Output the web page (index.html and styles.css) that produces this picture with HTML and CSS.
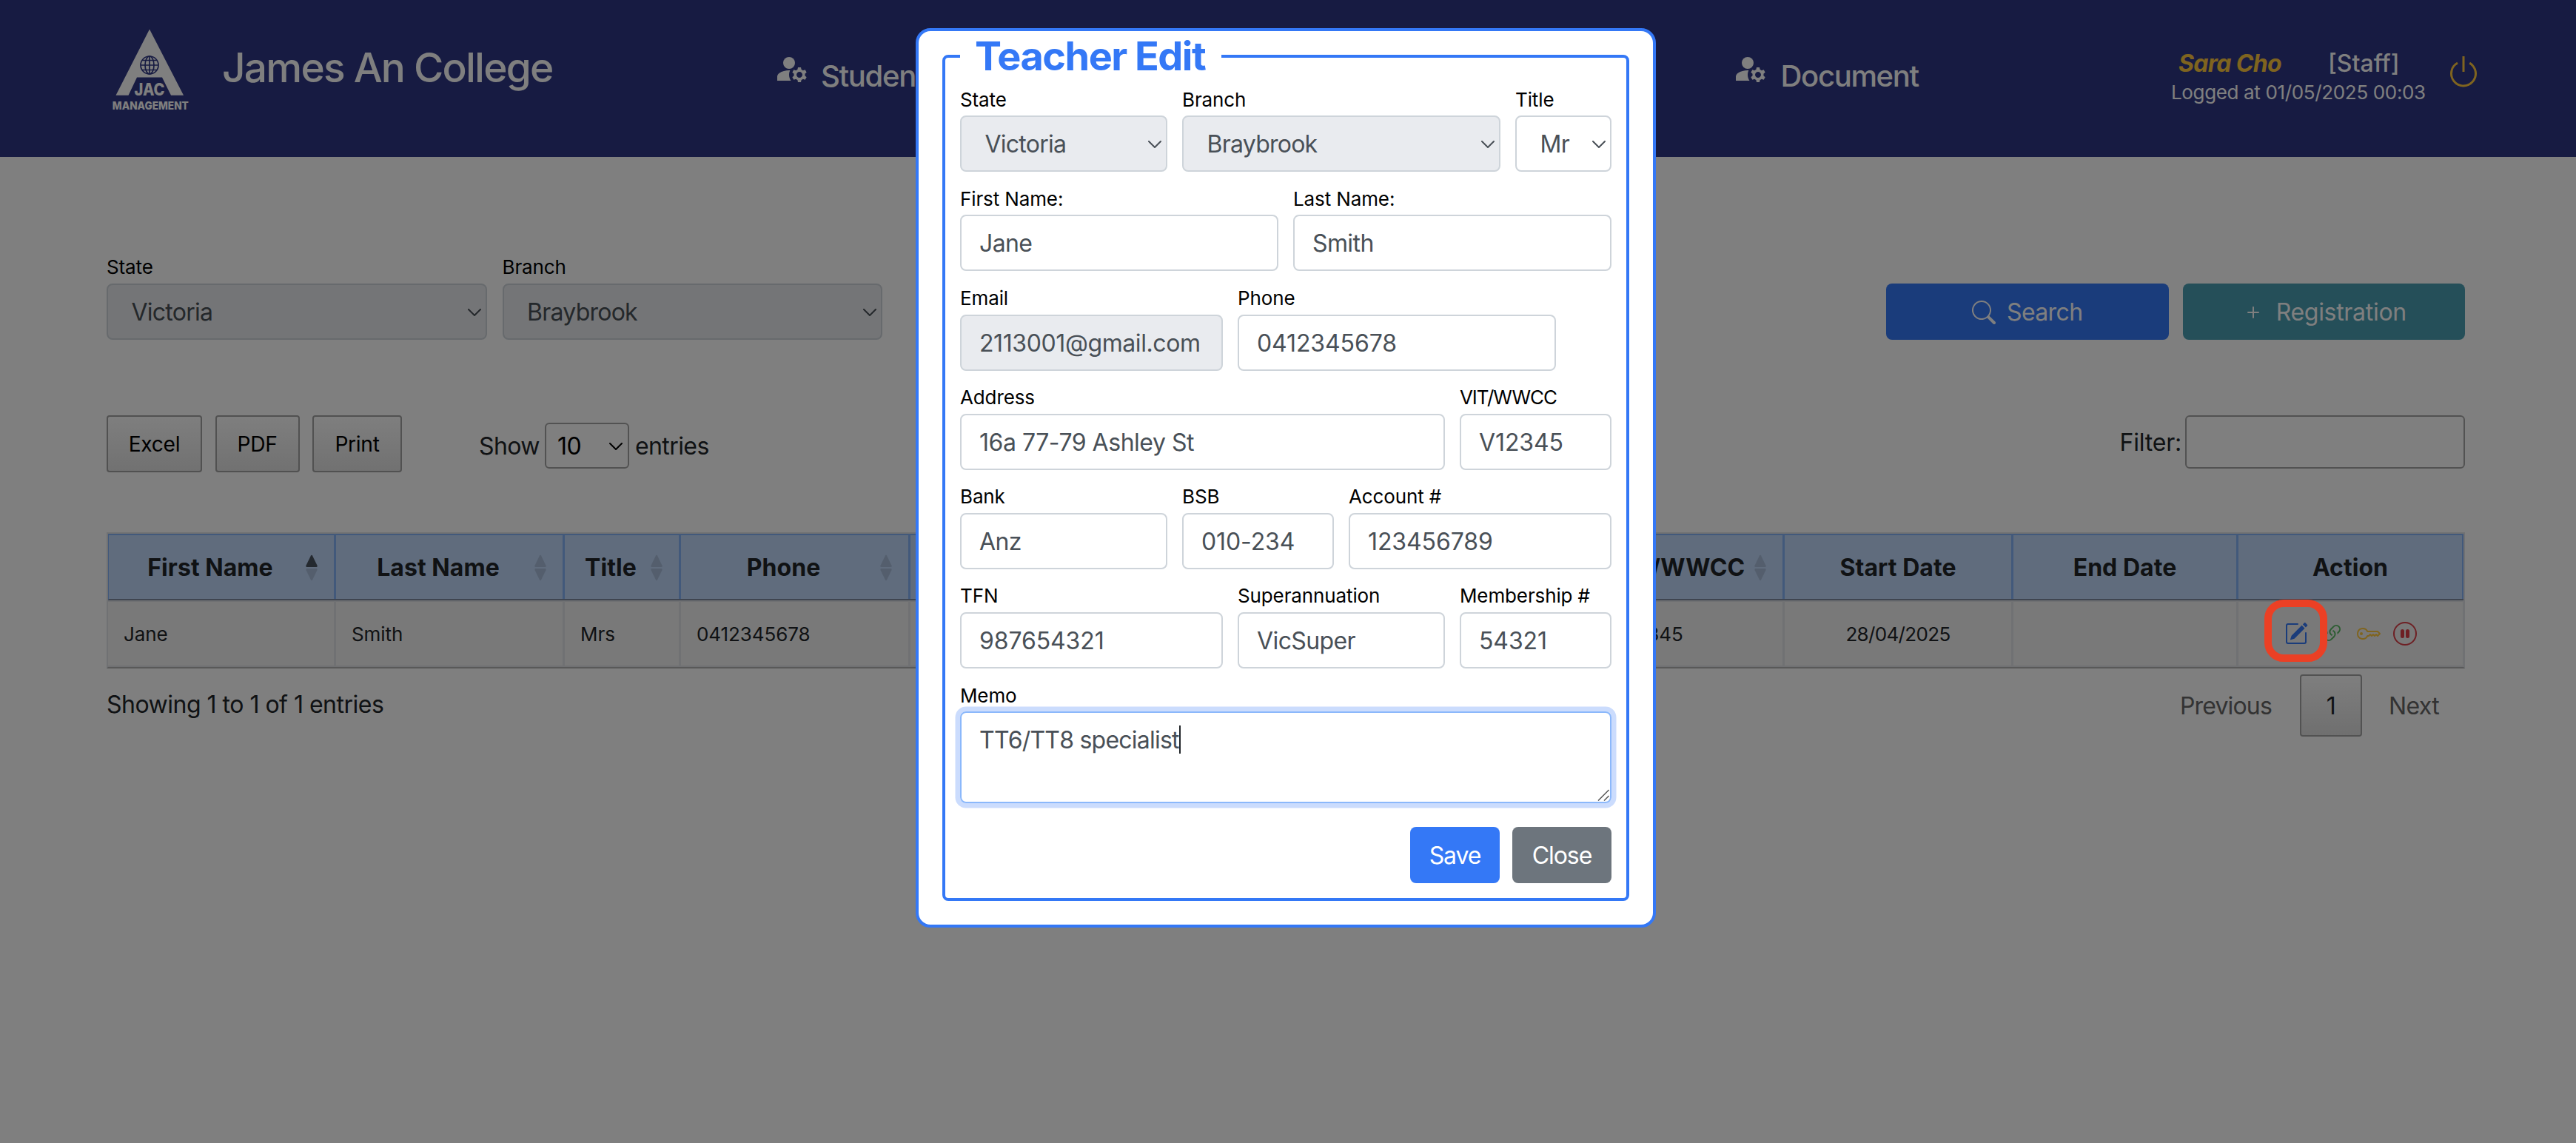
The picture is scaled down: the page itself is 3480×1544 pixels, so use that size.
FILE: index.html
```html
<!DOCTYPE html>
<html lang="en">
<head>
<meta charset="utf-8">
<title>James An College</title>
<link rel="stylesheet" href="styles.css">
</head>
<body>
<svg class="defs" width="0" height="0">
  <symbol id="accounts" viewBox="0 0 24 24">
    <circle cx="10" cy="8" r="4"/>
    <path d="M10.67 13.02c-.22-.01-.44-.02-.67-.02-2.42 0-4.68.67-6.61 1.82-.88.52-1.39 1.5-1.39 2.53V20h9.26c-.79-1.13-1.26-2.51-1.26-4 0-1.07.25-2.07.67-2.98zM20.75 16c0-.22-.03-.42-.06-.63l1.14-1.01-1-1.73-1.45.49c-.32-.27-.68-.48-1.08-.63L18 11h-2l-.3 1.49c-.4.15-.76.36-1.08.63l-1.45-.49-1 1.73 1.14 1.01c-.03.21-.06.41-.06.63s.03.42.06.63l-1.14 1.01 1 1.73 1.45-.49c.32.27.68.48 1.08.63L16 21h2l.3-1.49c.4-.15.76-.36 1.08-.63l1.45.49 1-1.73-1.14-1.01c.03-.21.06-.41.06-.63zM17 18c-1.1 0-2-.9-2-2s.9-2 2-2 2 .9 2 2-.9 2-2 2z"/>
  </symbol>
  <symbol id="chevron" viewBox="0 0 18 10">
    <path d="M1 1l8 8 8-8" fill="none" stroke="currentColor" stroke-width="2" stroke-linecap="round" stroke-linejoin="round"/>
  </symbol>
  <symbol id="sort" viewBox="0 0 16 36">
    <path class="up" d="M7 1.5Q8 0 9 1.5L15.6 15Q16 17 14.5 17H1.5Q0 17 .4 15z"/>
    <path class="down" d="M7 34.5Q8 36 9 34.5L15.6 21Q16 19 14.5 19H1.5Q0 19 .4 21z"/>
  </symbol>
</svg>

<div class="page">
  <header class="topbar">
    <svg class="logo" viewBox="150 36 106 116">
      <path class="logo-a" d="M202 39.5L248 128.7H231L219 104.5H185L173.500 128.7H156.500z"/>
      <g class="logo-grid">
        <circle cx="202" cy="88" r="12"/>
        <ellipse cx="202" cy="88" rx="6" ry="12"/>
        <path d="M202 76v24M190 88h24M192 81.500h20M192 94.500h20"/>
      </g>
      <text class="logo-jac" x="202" y="128.700" textLength="41" lengthAdjust="spacingAndGlyphs">JAC</text>
      <text class="logo-mgmt" x="203.300" y="147.700" textLength="103" lengthAdjust="spacingAndGlyphs">MANAGEMENT</text>
    </svg>
    <h1 class="brand">James An College</h1>
    <nav class="nav">
      <a class="nav-item"><svg class="nav-icon"><use href="#accounts"/></svg><span class="nav-text">Student</span></a>
      <a class="nav-item"><svg class="nav-icon"><use href="#accounts"/></svg><span class="nav-text">Document</span></a>
    </nav>
    <div class="user">
      <div class="user-row"><span class="user-name">Sara Cho</span><span class="user-role">[Staff]</span></div>
      <div class="user-log">Logged at 01/05/2025 00:03</div>
    </div>
    <svg class="power" viewBox="0 0 16 16"><path d="M7.500 1v7h1V1z"/><path d="M3 8.812a5 5 0 0 1 2.578-4.375l-.485-.874A6 6 0 1 0 11 3.616l-.501.865A5 5 0 1 1 3 8.812"/></svg>
  </header>

  <main class="content">
    <div class="filters">
      <div class="filter"><label class="label">State</label><div class="control select disabled"><span>Victoria</span><svg class="chev"><use href="#chevron"/></svg></div></div>
      <div class="filter"><label class="label">Branch</label><div class="control select disabled"><span>Braybrook</span><svg class="chev"><use href="#chevron"/></svg></div></div>
      <div class="actions">
        <button class="btn wide primary"><svg class="ico" viewBox="0 0 16 16"><path d="M11.742 10.344a6.500 6.500 0 1 0-1.397 1.398h-.001q.044.06.098.115l3.850 3.850a1 1 0 0 0 1.415-1.414l-3.850-3.850a1 1 0 0 0-.115-.1zM12 6.500a5.500 5.500 0 1 1-11 0 5.500 5.500 0 0 1 11 0"/></svg><span>Search</span></button>
        <button class="btn wide info"><svg class="ico" viewBox="0 0 16 16"><path d="M8 4a.5.5 0 0 1 .5.5v3h3a.5.5 0 0 1 0 1h-3v3a.5.5 0 0 1-1 0v-3h-3a.5.5 0 0 1 0-1h3v-3A.5.5 0 0 1 8 4"/></svg><span class="reg">Registration</span></button>
      </div>
    </div>

    <div class="toolbar">
      <button class="dt-btn excel">Excel</button>
      <button class="dt-btn pdf">PDF</button>
      <button class="dt-btn print">Print</button>
      <div class="length"><span class="show">Show</span><div class="length-select"><span>10</span><svg class="chev"><use href="#chevron"/></svg></div><span>entries</span></div>
      <div class="search"><span>Filter:</span><div class="search-box"></div></div>
    </div>

    <div class="table">
      <div class="row head">
        <div class="th sortable">First Name<svg class="sort asc"><use href="#sort"/></svg></div>
        <div class="th sortable">Last Name<svg class="sort"><use href="#sort"/></svg></div>
        <div class="th sortable">Title<svg class="sort"><use href="#sort"/></svg></div>
        <div class="th sortable">Phone<svg class="sort"><use href="#sort"/></svg></div>
        <div class="th"></div>
        <div class="th"></div>
        <div class="th sortable">VIT/WWCC<svg class="sort"><use href="#sort"/></svg></div>
        <div class="th">Start Date</div>
        <div class="th">End Date</div>
        <div class="th">Action</div>
      </div>
      <div class="row body">
        <div class="td">Jane</div>
        <div class="td">Smith</div>
        <div class="td">Mrs</div>
        <div class="td">0412345678</div>
        <div class="td"></div>
        <div class="td"></div>
        <div class="td vit">V12345</div>
        <div class="td center date">28/04/2025</div>
        <div class="td"></div>
        <div class="td center icons">
          <svg class="ico edit" viewBox="0 0 16 16"><path d="M15.502 1.940a.5.5 0 0 1 0 .706L14.459 3.690l-2-2L13.502.646a.5.5 0 0 1 .707 0l1.293 1.293zm-1.750 2.456-2-2L4.939 9.210a.5.5 0 0 0-.121.196l-.805 2.414a.25.25 0 0 0 .316.316l2.414-.805a.5.5 0 0 0 .196-.12l6.813-6.814z"/><path d="M1 13.500A1.500 1.500 0 0 0 2.500 15h11a1.500 1.500 0 0 0 1.500-1.500v-6a.5.5 0 0 0-1 0v6a.5.5 0 0 1-.5.5h-11a.5.5 0 0 1-.5-.5v-11a.5.5 0 0 1 .5-.5H9a.5.5 0 0 0 0-1H2.500A1.500 1.500 0 0 0 1 2.500z"/></svg>
          <svg class="ico link" viewBox="0 0 16 16"><path d="M4.715 6.542 3.343 7.914a3 3 0 1 0 4.243 4.243l1.828-1.829A3 3 0 0 0 8.586 5.500L8 6.086a1 1 0 0 0-.154.199 2 2 0 0 1 .861 3.337L6.880 11.450a2 2 0 1 1-2.830-2.830l.793-.792a4 4 0 0 1-.128-1.287z"/><path d="M6.586 4.672A3 3 0 0 0 7.414 9.500l.775-.776a2 2 0 0 1-.896-3.346L9.120 3.550a2 2 0 1 1 2.830 2.830l-.793.792c.112.420.155.855.128 1.287l1.372-1.372a3 3 0 1 0-4.243-4.243z"/></svg>
          <svg class="ico key" viewBox="0 0 16 16"><path d="M0 8a4 4 0 0 1 7.465-2H14a.5.5 0 0 1 .354.146l1.500 1.500a.5.5 0 0 1 0 .708l-1.500 1.500a.5.5 0 0 1-.708 0L13 9.207l-.646.647a.5.5 0 0 1-.708 0L11 9.207l-.646.647a.5.5 0 0 1-.708 0L9 9.207l-.646.647A.5.5 0 0 1 8 10h-.535A4 4 0 0 1 0 8m4-3a3 3 0 1 0 2.712 4.285A.5.5 0 0 1 7.163 9h.63l.853-.854a.5.5 0 0 1 .708 0l.646.647.646-.647a.5.5 0 0 1 .708 0l.646.647.646-.647a.5.5 0 0 1 .708 0l.646.647.793-.793-1-1h-6.630a.5.5 0 0 1-.451-.285A3 3 0 0 0 4 5"/><path d="M4 8a1 1 0 1 1-2 0 1 1 0 0 1 2 0"/></svg>
          <svg class="ico pause" viewBox="0 0 16 16"><path d="M8 15A7 7 0 1 1 8 1a7 7 0 0 1 0 14m0 1A8 8 0 1 0 8 0a8 8 0 0 0 0 16"/><path d="M5 6.250a1.250 1.250 0 1 1 2.500 0v3.500a1.250 1.250 0 1 1-2.500 0zm3.500 0a1.250 1.250 0 1 1 2.500 0v3.500a1.250 1.250 0 1 1-2.500 0z"/></svg>
        </div>
      </div>
    </div>

    <div class="footer">
      <div class="info-text">Showing 1 to 1 of 1 entries</div>
      <div class="pager"><span class="prev">Previous</span><span class="current">1</span><span class="next">Next</span></div>
    </div>
  </main>
</div>

<div class="backdrop"></div>
<div class="highlight"></div>

<div class="modal">
  <fieldset class="form">
    <legend class="legend">Teacher Edit</legend>
    <div class="grid">
      <div class="field w4"><label class="label">State</label><div class="control select disabled"><span>Victoria</span><svg class="chev"><use href="#chevron"/></svg></div></div>
      <div class="field w6"><label class="label">Branch</label><div class="control select disabled"><span>Braybrook</span><svg class="chev"><use href="#chevron"/></svg></div></div>
      <div class="field w2"><label class="label">Title</label><div class="control select"><span>Mr</span><svg class="chev"><use href="#chevron"/></svg></div></div>

      <div class="field w6"><label class="label">First Name:</label><div class="control">Jane</div></div>
      <div class="field w6"><label class="label">Last Name:</label><div class="control">Smith</div></div>

      <div class="field w5"><label class="label">Email</label><div class="control disabled mail">2113001@gmail.com</div></div>
      <div class="field w6"><label class="label">Phone</label><div class="control num">0412345678</div></div>

      <div class="field w9 start"><label class="label">Address</label><div class="control address">16a 77-79 Ashley St</div></div>
      <div class="field w3"><label class="label vit-label">VIT/WWCC</label><div class="control num">V12345</div></div>

      <div class="field w4"><label class="label">Bank</label><div class="control">Anz</div></div>
      <div class="field w3"><label class="label">BSB</label><div class="control num">010-234</div></div>
      <div class="field w5"><label class="label">Account #</label><div class="control num">123456789</div></div>

      <div class="field w5"><label class="label">TFN</label><div class="control num">987654321</div></div>
      <div class="field w4"><label class="label">Superannuation</label><div class="control">VicSuper</div></div>
      <div class="field w3"><label class="label">Membership #</label><div class="control num">54321</div></div>

      <div class="field w12"><label class="label">Memo</label><div class="memo"><span>TT6/TT8 specialist</span><i class="caret"></i>
        <svg class="grip" viewBox="0 0 16 16"><path d="M1 15.500L15.500 1M9 15.500L15.500 9"/></svg></div></div>
    </div>
    <div class="buttons"><button class="btn primary save">Save</button><button class="btn secondary close">Close</button></div>
  </fieldset>
</div>
</body>
</html>
```
FILE: styles.css
```css
* { box-sizing: border-box; }

body {
  margin: 0;
  width: 3480px;
  height: 1544px;
  position: relative;
  overflow: hidden;
  background: #fff;
  color: #212529;
  font: 400 32px/48px "Inter", "Liberation Sans", sans-serif;
  letter-spacing: -0.6px;
}

.defs { position: absolute; }
svg { display: block; fill: currentColor; }
button { font: inherit; letter-spacing: inherit; margin: 0; padding: 0; }

/* top bar */
.topbar {
  display: flex;
  align-items: flex-start;
  height: 212px;
  padding: 36px 0 0 150px;
  background: #2f3785;
  color: #fff;
}
.logo { width: 106px; height: 116px; flex: none; overflow: visible; }
.logo-a { fill: #fff; }
.logo-grid { fill: none; stroke: #2f3785; stroke-width: 1.7; }
.logo-jac, .logo-mgmt { fill: #fff; text-anchor: middle; letter-spacing: 0; font-weight: 800; }
.logo-jac { font-size: 23px; }
.logo-mgmt { font-size: 14.5px; }
.brand {
  width: 746px;
  margin: 15px 0 0 44px;
  font-size: 55px;
  font-weight: 500;
  line-height: 80px;
  letter-spacing: -1.78px;
}
.nav { display: flex; width: 1886px; margin-top: 33px; }
.nav-item { display: flex; width: 1295px; flex: none; gap: 15px; }
.nav-item:last-child { width: auto; gap: 16.5px; }
.nav-icon { width: 48px; height: 48px; }
.nav-text { margin-top: 9.5px; font-size: 40px; font-weight: 500; letter-spacing: -1.32px; }
.user { width: 372px; margin-top: 30px; }
.user-row { display: flex; line-height: 40px; }
.user-name { width: 213px; padding-left: 11px; color: #ffc83e; font-weight: 700; font-style: italic; letter-spacing: -0.68px; }
.user-role { font-weight: 500; letter-spacing: 0; }
.user-log { margin-top: 3px; padding-left: 1px; font-size: 26px; line-height: 32px; letter-spacing: -0.35px; }
.power { width: 48px; height: 48px; margin-top: 37px; color: #ffc83e; }

/* filter row */
.content { padding: 128px 150px 0 144px; }
.filters { display: flex; align-items: flex-end; gap: 21px; height: 119px; }
.filter { width: 513.500px; }
.label { display: block; height: 40px; margin-bottom: 2.700px; color: #000; font-size: 26px; line-height: 41px; letter-spacing: -0.12px; white-space: nowrap; }
.control {
  display: flex;
  align-items: center;
  height: 76px;
  padding: 2px 24px 0;
  border: 2px solid #ced4da;
  border-radius: 8px;
  background: #fff;
  color: #495057;
  white-space: nowrap;
}
.select { justify-content: space-between; padding: 2px 6px 0 31.500px; letter-spacing: -0.75px; }
.disabled { background: #e9ebef; }
.chev { width: 18px; height: 10px; flex: none; }
.num { letter-spacing: -0.1px; }
.mail { letter-spacing: -0.4px; }
.address { letter-spacing: -0.47px; }
.actions { display: flex; gap: 19px; margin-left: auto; }
.btn {
  display: flex;
  align-items: center;
  justify-content: center;
  height: 76px;
  padding-top: 2px;
  border: 0;
  border-radius: 8px;
  color: #fff;
}
.wide { width: 381.500px; gap: 15px; }
.reg { letter-spacing: -0.3px; }
.primary { background: #3478f6; }
.info { background: #4a9eb2; }
.secondary { background: #6d757d; }
.ico { width: 32px; height: 32px; flex: none; }

/* table toolbar */
.toolbar { display: flex; height: 77px; margin-top: 102px; }
.dt-btn {
  height: 77px;
  margin-right: 17.500px;
  border: 2px solid #a2a2a2;
  border-radius: 4px;
  background: linear-gradient(#fdfdfd, #e3e3e3);
  color: #000;
  font-size: 28.160px;
  letter-spacing: -0.3px;
}
.excel { width: 129px; }
.pdf { width: 114px; }
.print { width: 121px; margin-right: 0; }
.length { display: flex; align-items: center; height: 62px; margin: 10px 0 0 104px; }
.length > span { padding-top: 2px; }
.show { width: 89px; }
.length-select {
  display: flex;
  align-items: center;
  justify-content: space-between;
  width: 114px;
  height: 62px;
  margin-right: 8px;
  padding: 2px 7px 0 15px;
  border: 2px solid #a4a4a4;
  border-radius: 6px;
  color: #000;
}
.search { display: flex; align-items: center; gap: 5px; height: 72px; margin-left: auto; letter-spacing: -0.2px; }
.search > span { padding-top: 2px; }
.search-box { width: 378px; height: 72px; border: 2px solid #a4a4a4; border-radius: 6px; }

/* data table */
.table {
  width: 3186px;
  margin-top: 81px;
  border: 2px solid #e0e3e6;
  border-bottom: 2px solid #b2b2b2;
}
.row { display: grid; grid-template-columns: 308px 309px 157px 310px 309px 618px 254px 309px 304px 304px; }
.head {
  grid-template-columns: 307px 309px 157px 310px 309px 618px 254px 309px 304px 304px;
  height: 90px;
  border-top: 2px solid #84b2f6;
  border-left: 1px solid #84b2f6;
  border-bottom: 2px solid #7e8ba0;
  background: #c0d8fa;
}
.th {
  position: relative;
  display: flex;
  align-items: center;
  justify-content: center;
  padding-top: 2px;
  border-right: 3px solid #84b2f6;
  font-weight: 700;
  letter-spacing: 0.05px;
}
.sortable { padding-right: 30px; }
.sort { position: absolute; right: 22px; top: 26px; width: 16px; height: 36px; color: #000; --up: .12; }
.sort.asc { --up: .62; }
.up { opacity: var(--up); }
.down { opacity: .12; }
.body { height: 90px; border-top: 2px solid #e0e3e6; border-bottom: 2px solid #e0e3e6; background: #f2f2f2; }
.td {
  display: flex;
  align-items: center;
  padding: 2px 0 0 21px;
  border-right: 3px solid #e0e3e6;
  font-size: 26px;
  letter-spacing: -0.07px;
}
.th:last-child { border-right-width: 2px; }
.td:last-child { border-right-width: 1px; }
.td.vit { padding-left: 24px; }
.td.center { justify-content: center; padding: 2px 0 0; }
.td.date { letter-spacing: -0.67px; }
.td.icons { gap: 16.800px; padding: 0; }
.edit { color: #3478f6; }
.link { color: #58ba64; }
.key { color: #ffc83e; }
.pause { color: #dc4049; }

/* table footer */
.footer { display: flex; justify-content: space-between; height: 92px; padding-top: 8px; }
.info-text { margin-top: 17px; letter-spacing: -0.5px; }
.pager { display: flex; align-items: center; height: 84px; }
.prev, .next { padding-top: 1px; color: #666; }
.prev { margin-right: 38px; letter-spacing: -0.83px; }
.current {
  display: flex;
  align-items: center;
  justify-content: center;
  width: 84px;
  height: 84px;
  margin-right: 36px;
  padding-top: 1px;
  border: 2px solid #a4a4a4;
  border-radius: 4px;
  background: linear-gradient(#fdfdfd, #dfdfdf);
}
.next { width: 103px; }

/* overlay */
.backdrop { position: absolute; inset: 0; background: rgba(0, 0, 0, .5); }
.highlight {
  position: absolute;
  left: 3059px;
  top: 810px;
  width: 85px;
  height: 84px;
  border: 10px solid #eb4025;
  border-radius: 26px;
}

/* modal */
.modal {
  position: absolute;
  left: 1237px;
  top: 38px;
  width: 1000px;
  height: 1215px;
  padding: 2px 32px 32px;
  border: 4px solid #3478f6;
  border-radius: 20px;
  background: #fff;
}
.form {
  min-width: 0;
  height: 1173px;
  margin: 0;
  padding: 0 20px;
  border: 4px solid #3478f6;
  border-radius: 8px;
}
.legend {
  width: 353px;
  padding: 0 20px;
  color: #3478f6;
  font-size: 54px;
  font-weight: 700;
  line-height: 64px;
  letter-spacing: -1.52px;
  white-space: nowrap;
}
.grid { display: grid; grid-template-columns: repeat(12, 55px); gap: 15.500px 20px; padding-top: 5.500px; }
.w2 { grid-column: span 2; }
.w3 { grid-column: span 3; }
.w4 { grid-column: span 4; }
.w5 { grid-column: span 5; }
.w6 { grid-column: span 6; }
.w9 { grid-column: span 9; }
.w12 { grid-column: span 12; }
.start { grid-column: 1 / span 9; }
.vit-label { letter-spacing: -1.1px; }
.memo {
  position: relative;
  display: flex;
  align-items: flex-start;
  height: 124px;
  padding: 13px 24px;
  border: 2px solid #8bb8fb;
  border-radius: 8px;
  box-shadow: 0 0 0 6.500px #cbdcfd;
  color: #495057;
  letter-spacing: -0.78px;
}
.caret { width: 2px; height: 38px; margin-top: 4px; background: #212529; }
.grip { position: absolute; right: 1px; bottom: 1px; width: 16px; height: 16px; fill: none; stroke: #555; stroke-width: 1.5; }
.buttons { display: flex; justify-content: flex-end; gap: 17px; margin-top: 32px; }
.save { width: 121px; letter-spacing: -1.1px; }
.close { width: 134px; letter-spacing: -1.05px; }
```
